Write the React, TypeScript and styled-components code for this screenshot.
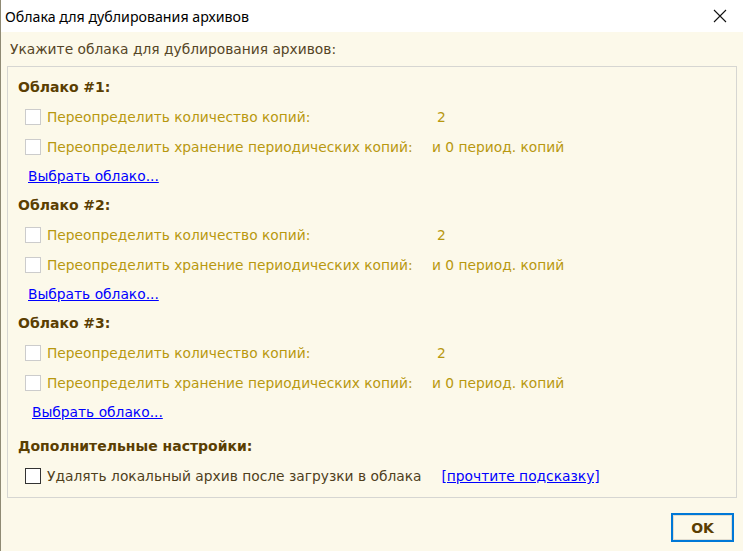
import styled, { createGlobalStyle } from 'styled-components'

const GlobalStyle = createGlobalStyle`
  html, body {
    margin: 0;
    padding: 0;
  }
  body {
    font-family: "DejaVu Sans", Verdana, sans-serif;
  }
`

type CloudRow = { label: string; value: string; valueIndent?: number }

const rows: CloudRow[] = [
  { label: 'Переопределить количество копий:', value: '2', valueIndent: 5 },
  { label: 'Переопределить хранение периодических копий:', value: 'и 0 период. копий' },
]

const clouds = [
  { title: 'Облако #1:', linkIndent: 0 },
  { title: 'Облако #2:', linkIndent: 0 },
  { title: 'Облако #3:', linkIndent: 4 },
]

export default function App() {
  return (
    <>
      <GlobalStyle />
      <Window>
        <TitleBar>
          <TitleText>Облака для дублирования архивов</TitleText>
          <CloseButton aria-label="Закрыть">
            <svg width="14" height="14" viewBox="0 0 14 14">
              <path d="M1 1 L13 13 M13 1 L1 13" stroke="#111" strokeWidth="1.1" fill="none" />
            </svg>
          </CloseButton>
        </TitleBar>

        <Body>
          <Prompt>Укажите облака для дублирования архивов:</Prompt>

          <GroupBox>
            {clouds.map(cloud => (
              <Section key={cloud.title}>
                <Heading>{cloud.title}</Heading>
                {rows.map(row => (
                  <OptionRow key={row.label}>
                    <CheckBox $disabled />
                    <OptionLabel $disabled>{row.label}</OptionLabel>
                    <OptionValue $indent={row.valueIndent ?? 0}>{row.value}</OptionValue>
                  </OptionRow>
                ))}
                <LinkRow $indent={cloud.linkIndent}>
                  <Link href="#">Выбрать облако...</Link>
                </LinkRow>
              </Section>
            ))}

            <Heading $gapTop={5}>Дополнительные настройки:</Heading>
            <OptionRow>
              <CheckBox />
              <PlainLabel>Удалять локальный архив после загрузки в облака</PlainLabel>
              <Link href="#">[прочтите подсказку]</Link>
            </OptionRow>
          </GroupBox>

          <Footer>
            <OkButton>OK</OkButton>
          </Footer>
        </Body>
      </Window>
    </>
  )
}

const Window = styled.div`
  width: 743px;
  height: 551px;
  display: flex;
  flex-direction: column;
  background: #fcf9ea;
  box-sizing: border-box;
  border-left: 1px solid #8f8a74;
  overflow: hidden;
`

const TitleBar = styled.div`
  height: 32px;
  flex: none;
  display: flex;
  align-items: center;
  justify-content: space-between;
  background: #fff;
  padding-left: 4px;
`

const TitleText = styled.span`
  font-family: "Segoe UI", "Noto Sans", "Open Sans", sans-serif;
  font-size: 14.2px;
  color: #000;
`

const CloseButton = styled.button`
  width: 46px;
  height: 32px;
  border: none;
  background: transparent;
  display: flex;
  align-items: center;
  justify-content: center;
  padding: 0;
`

const Body = styled.div`
  flex: 1;
  display: flex;
  flex-direction: column;
`

const Prompt = styled.div`
  font-size: 13.8px;
  color: #554526;
  height: 34px;
  padding-left: 9px;
  display: flex;
  align-items: center;
`

const GroupBox = styled.div`
  margin: 0 6px;
  border: 1px solid #d6d6d2;
  padding: 5px 0 6px 10px;
  display: flex;
  flex-direction: column;
`

const Section = styled.div`
  display: flex;
  flex-direction: column;
`

const Heading = styled.div<{ $gapTop?: number }>`
  height: 30px;
  margin-top: ${({ $gapTop }) => $gapTop ?? 0}px;
  display: flex;
  align-items: center;
  font-size: 14px;
  font-weight: 700;
  color: #5a3e02;
`

const OptionRow = styled.div`
  height: 30px;
  display: flex;
  align-items: center;
  padding-left: 7px;
  font-size: 13.8px;
`

const CheckBox = styled.span<{ $disabled?: boolean }>`
  width: 16px;
  height: 16px;
  box-sizing: border-box;
  flex: none;
  background: #fff;
  border: 1px solid ${({ $disabled }) => ($disabled ? '#cccccc' : '#333333')};
  margin-right: 6px;
`

const OptionLabel = styled.span<{ $disabled?: boolean }>`
  width: 385px;
  flex: none;
  color: ${({ $disabled }) => ($disabled ? '#b8980f' : '#554526')};
`

const OptionValue = styled.span<{ $indent: number }>`
  color: #b8980f;
  padding-left: ${({ $indent }) => $indent}px;
`

const PlainLabel = styled.span`
  color: #4f3f1c;
  margin-right: 20px;
`

const LinkRow = styled.div<{ $indent: number }>`
  height: 28px;
  display: flex;
  align-items: center;
  padding-left: ${({ $indent }) => 10 + $indent}px;
`

const Link = styled.a`
  color: #0000ff;
  text-decoration: underline;
  font-size: 13.8px;
`

const Footer = styled.div`
  flex: 1;
  display: flex;
  justify-content: flex-end;
  align-items: flex-end;
  padding: 0 9px 9px 0;
`

const OkButton = styled.button`
  width: 63px;
  height: 29px;
  box-sizing: border-box;
  border: 2px solid #0078d7;
  outline: 1px solid #e1ddd0;
  outline-offset: -3px;
  background: #fcf9ea;
  font-family: "DejaVu Sans", Verdana, sans-serif;
  font-size: 14px;
  font-weight: 700;
  color: #5a3e02;
  padding: 0;
`
